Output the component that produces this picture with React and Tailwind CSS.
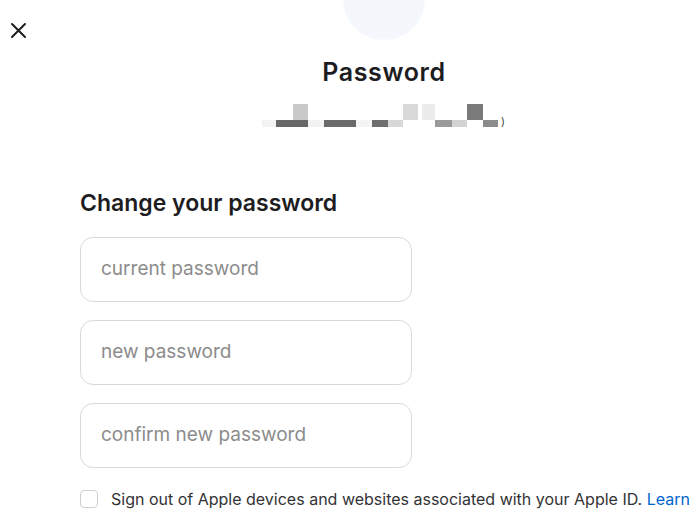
import React from "react";

function Mosaic() {
  return (
    <svg width="250" height="30" viewBox="0 0 250 30" className="block">
      <rect x="0" y="17" width="14" height="7" fill="#f3f3f3" />
      <rect x="31" y="1" width="15" height="16" fill="#c9c9c9" />
      <rect x="14" y="17" width="32" height="7" fill="#676767" />
      <rect x="46" y="17" width="16" height="7" fill="#f2f2f2" />
      <rect x="62" y="17" width="32" height="7" fill="#6a6a6a" />
      <rect x="94" y="17" width="16" height="7" fill="#f4f4f4" />
      <rect x="110" y="17" width="16" height="7" fill="#6e6e6e" />
      <rect x="126" y="17" width="15" height="7" fill="#d8d8d8" />
      <rect x="141" y="1" width="15" height="16" fill="#d9d9d9" />
      <rect x="160" y="1" width="13" height="16" fill="#ececec" />
      <rect x="173" y="17" width="17" height="7" fill="#9a9a9a" />
      <rect x="190" y="17" width="15" height="7" fill="#d3d3d3" />
      <rect x="205" y="1" width="16" height="16" fill="#7a7a7a" />
      <rect x="221" y="17" width="15" height="7" fill="#8b8b8b" />
      <text x="239" y="22" fontSize="11" fill="#444" fontFamily="Inter, sans-serif">)</text>
    </svg>
  );
}

function Field({ placeholder }) {
  return (
    <div className="w-[332px] h-[65px] rounded-[13px] border border-[#d9d9d9] flex items-center px-5">
      <span className="text-[19px] text-[#8c8c8c]">{placeholder}</span>
    </div>
  );
}

export default function App() {
  return (
    <div
      className="w-[700px] h-[520px] bg-white relative overflow-hidden text-[#1d1d1f]"
      style={{ fontFamily: "Inter, 'Liberation Sans', sans-serif" }}
    >
      <button className="absolute left-[10px] top-[22px] text-[#1d1d1f]">
        <svg width="17" height="17" viewBox="0 0 17 17">
          <path d="M2 2 L15 15 M15 2 L2 15" stroke="#1d1d1f" strokeWidth="2" strokeLinecap="round" />
        </svg>
      </button>
      <div className="flex flex-col items-center pl-[68px]">
        <div className="w-[82px] h-[82px] rounded-full bg-[#f4f8fc] mt-[-42px]" />
        <h1 className="mt-[16px] text-[25px] font-semibold leading-[32px] tracking-[0.6px]">Password</h1>
        <div className="mt-[15px] ml-[6px]">
          <Mosaic />
        </div>
      </div>
      <div className="pl-20 mt-[55px]">
        <h2 className="text-[23px] font-semibold leading-[30px]">Change your password</h2>
        <div className="mt-[19px] flex flex-col gap-[18px]">
          <Field placeholder="current password" />
          <Field placeholder="new password" />
          <Field placeholder="confirm new password" />
        </div>
        <div className="mt-[19px] flex items-start gap-[13px] whitespace-nowrap">
          <div className="w-[18px] h-[18px] mt-[3px] rounded-[4px] border border-[#cfcfcf] shrink-0" />
          <span className="text-[16px] leading-[24px] text-[#333336]">
            Sign out of Apple devices and websites associated with your Apple ID.{" "}
            <span className="text-[#0066cc]">Learn</span>
          </span>
        </div>
      </div>
    </div>
  );
}
